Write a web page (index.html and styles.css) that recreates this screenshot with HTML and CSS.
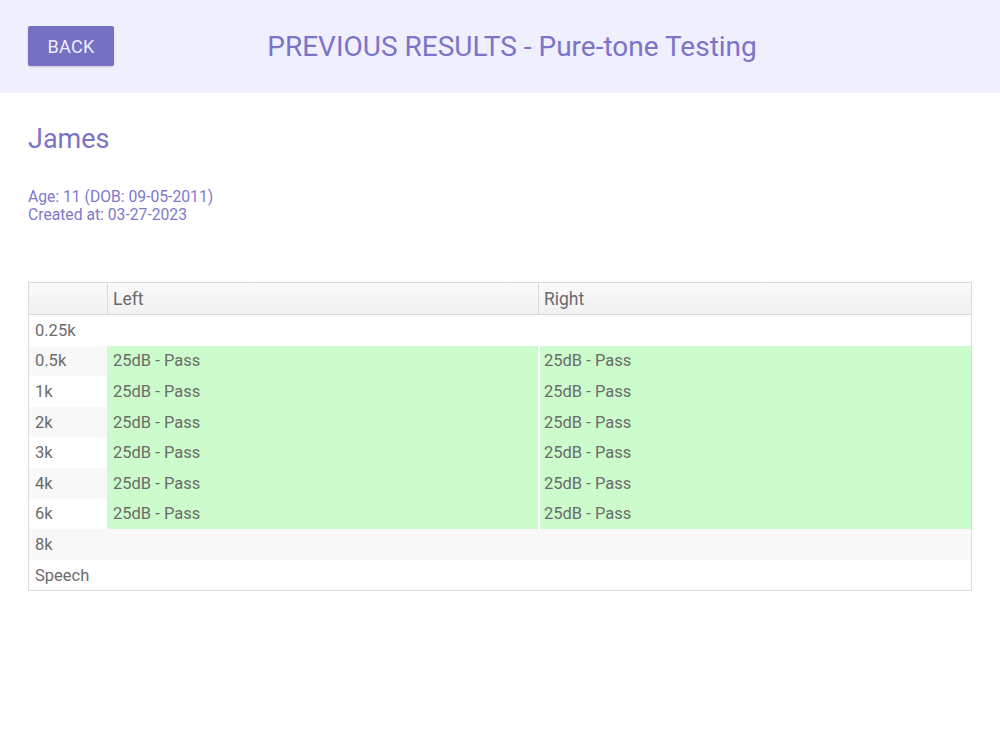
FILE: index.html
```html
<!DOCTYPE html>
<html>
<head>
<meta charset="utf-8">
<link rel="stylesheet" href="styles.css">
</head>
<body>
<header class="topbar">
  <button class="back">BACK</button>
  <h1 class="title">PREVIOUS RESULTS - Pure-tone Testing</h1>
</header>
<main class="content">
  <h2 class="name">James</h2>
  <div class="meta">
    <div>Age: 11 (DOB: 09-05-2011)</div>
    <div>Created at: 03-27-2023</div>
  </div>
  <div class="table">
    <div class="row head">
      <div class="cell c1"></div>
      <div class="cell c2">Left</div>
      <div class="cell c3">Right</div>
    </div>
    <div class="row">
      <div class="cell c1">0.25k</div><div class="cell c2"></div><div class="cell c3"></div>
    </div>
    <div class="row alt">
      <div class="cell c1">0.5k</div><div class="cell c2 pass">25dB - Pass</div><div class="cell c3 pass">25dB - Pass</div>
    </div>
    <div class="row">
      <div class="cell c1">1k</div><div class="cell c2 pass">25dB - Pass</div><div class="cell c3 pass">25dB - Pass</div>
    </div>
    <div class="row alt">
      <div class="cell c1">2k</div><div class="cell c2 pass">25dB - Pass</div><div class="cell c3 pass">25dB - Pass</div>
    </div>
    <div class="row">
      <div class="cell c1">3k</div><div class="cell c2 pass">25dB - Pass</div><div class="cell c3 pass">25dB - Pass</div>
    </div>
    <div class="row alt">
      <div class="cell c1">4k</div><div class="cell c2 pass">25dB - Pass</div><div class="cell c3 pass">25dB - Pass</div>
    </div>
    <div class="row">
      <div class="cell c1">6k</div><div class="cell c2 pass">25dB - Pass</div><div class="cell c3 pass">25dB - Pass</div>
    </div>
    <div class="row alt">
      <div class="cell c1">8k</div><div class="cell c2"></div><div class="cell c3"></div>
    </div>
    <div class="row">
      <div class="cell c1">Speech</div><div class="cell c2"></div><div class="cell c3"></div>
    </div>
  </div>
</main>
</body>
</html>
```
FILE: styles.css
```css
* { box-sizing: border-box; }
html, body { margin: 0; padding: 0; background: #fff; }
body { font-family: Roboto, "Liberation Sans", sans-serif; }

.topbar {
  height: 93px;
  background: #f0effd;
  display: flex;
  align-items: center;
  padding: 0 28px;
}
.back {
  width: 86px;
  height: 40px;
  background: #7670c3;
  color: #eeecfc;
  border: none;
  border-radius: 2px;
  font-family: Roboto, "Liberation Sans", sans-serif;
  font-size: 18px;
  letter-spacing: 0.3px;
  margin-bottom: 1px;
  box-shadow: 0 1px 2px rgba(0,0,0,0.15);
}
.title {
  flex: 1;
  margin: 0;
  text-align: center;
  font-weight: 400;
  font-size: 28px;
  color: #7b74c8;
  padding-right: 62px;
  margin-bottom: 1px;
}

.content { padding: 0 28px; }
.name {
  margin: 0;
  padding-top: 30px;
  font-weight: 400;
  font-size: 27px;
  line-height: 32px;
  color: #7b74c8;
}
.meta {
  margin-top: 33px;
  font-size: 15.7px;
  line-height: 18px;
  color: #8079cb;
}

.table {
  margin-top: 58px;
  border: 1px solid #dcdcdc;
  color: #6b6b6b;
  font-size: 16.5px;
}
.row {
  display: grid;
  grid-template-columns: 78px 431px 1fr;
  height: 30.6px;
}
.row.head {
  height: 32px;
  font-size: 17.5px;
  background: linear-gradient(#fafafa, #f1f1f1);
  border-bottom: 1px solid #dadada;
}
.row.head .cell + .cell { border-left: 1px solid #dadada; }
.row.alt { background: #f8f8f8; }
.cell {
  display: flex;
  align-items: center;
  padding-left: 6px;
  white-space: nowrap;
}
.row.head .c2, .row.head .c3 { padding-left: 5px; }
.pass { background: #ccfccc; }
.c3.pass { border-left: 2px solid #fff; padding-left: 4px; }
```
